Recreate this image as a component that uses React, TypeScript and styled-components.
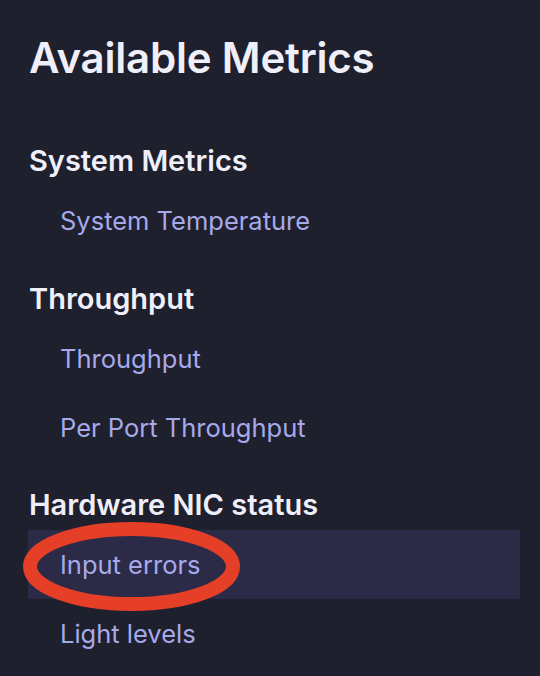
import React from "react";
import styled, { createGlobalStyle } from "styled-components";

const Global = createGlobalStyle`
  html, body { margin: 0; padding: 0; background: #1f202d; }
  body { font-family: Inter, "Noto Sans", sans-serif; -webkit-font-smoothing: antialiased; }
`;

const Page = styled.div`
  width: 540px;
  height: 676px;
  overflow: hidden;
  box-sizing: border-box;
  padding: 28px 20px 0 28px;
  background: #1f202d;
  color: #eeeef8;
  display: flex;
  flex-direction: column;
`;

const Title = styled.h1`
  margin: 0 0 55px 1px;
  font-size: 42px;
  line-height: 60px;
  font-weight: 600;
  letter-spacing: -0.2px;
  color: #efeffa;
`;

const Sections = styled.div`
  display: flex;
  flex-direction: column;
  gap: 25.5px;
`;

const Section = styled.section`
  display: flex;
  flex-direction: column;
`;

const SectionTitle = styled.h2`
  margin: 0 0 8px 1px;
  font-size: 29px;
  line-height: 35px;
  font-weight: 600;
  color: #efeffa;
`;

const List = styled.ul`
  list-style: none;
  margin: 0;
  padding: 0;
  display: flex;
  flex-direction: column;
`;

const Item = styled.li<{ $active?: boolean }>`
  position: relative;
  height: 69px;
  display: flex;
  align-items: center;
  padding-left: 32px;
  font-size: 25.5px;
  font-weight: 400;
  color: #a6a9ea;
  background: ${(p) => (p.$active ? "#2b2b48" : "transparent")};
`;

const Annotation = styled.svg`
  position: absolute;
  left: -5px;
  top: -8px;
  overflow: visible;
  pointer-events: none;
`;

const sections = [
  { title: "System Metrics", items: ["System Temperature"] },
  { title: "Throughput", items: ["Throughput", "Per Port Throughput"] },
  { title: "Hardware NIC status", items: ["Input errors", "Light levels"] },
];

export default function App() {
  return (
    <>
      <Global />
      <Page>
        <Title>Available Metrics</Title>
        <Sections>
          {sections.map((s) => (
            <Section key={s.title}>
              <SectionTitle>{s.title}</SectionTitle>
              <List>
                {s.items.map((it) => {
                  const active = it === "Input errors";
                  return (
                    <Item key={it} $active={active}>
                      {it}
                      {active && (
                        <Annotation width="220" height="92" viewBox="0 0 220 92">
                          <ellipse cx="108.5" cy="44.5" rx="101.5" ry="37.5" fill="none" stroke="#e63f27" strokeWidth="14" />
                        </Annotation>
                      )}
                    </Item>
                  );
                })}
              </List>
            </Section>
          ))}
        </Sections>
      </Page>
    </>
  );
}
